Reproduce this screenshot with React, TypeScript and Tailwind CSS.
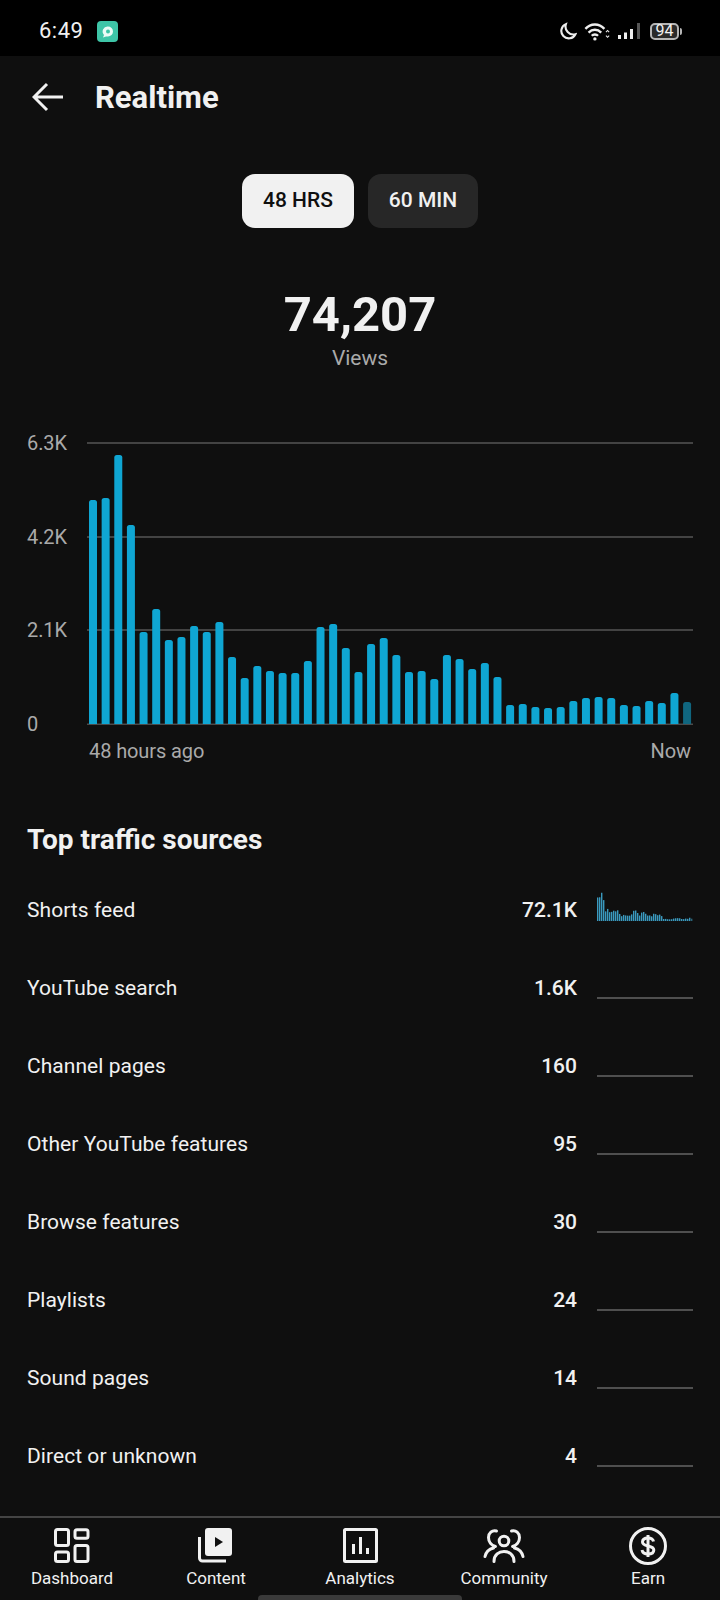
const BASE_Y = 282;

// bar heights in px, read off the 48 hour chart
const bars = [
  224, 226, 269, 199, 92, 115, 84, 87, 98, 92, 102, 67, 46, 58, 53, 51, 51, 63, 97, 100, 76, 52,
  80, 86, 69, 52, 53, 45, 69, 65, 55, 61, 47, 19, 20, 17, 16, 17, 23, 26, 27, 26, 19, 18, 23, 21, 31, 22,
];

const sources = [
  { name: "Shorts feed", value: "72.1K", spark: true },
  { name: "YouTube search", value: "1.6K" },
  { name: "Channel pages", value: "160" },
  { name: "Other YouTube features", value: "95" },
  { name: "Browse features", value: "30" },
  { name: "Playlists", value: "24" },
  { name: "Sound pages", value: "14" },
  { name: "Direct or unknown", value: "4" },
];

function barPath(x: number, h: number, w: number, r: number) {
  const top = BASE_Y - h;
  return `M${x} ${BASE_Y}V${top + r}Q${x} ${top} ${x + r} ${top}H${x + w - r}Q${x + w} ${top} ${x + w} ${top + r}V${BASE_Y}Z`;
}

function StatusBar() {
  return (
    <div className="flex h-14 items-center bg-black pl-[39px] pr-[38px] pt-[6px] text-[#f1f1f1]">
      <span className="text-[22px] leading-none tracking-[0.5px]">6:49</span>
      <svg width="21" height="21" viewBox="0 0 21 21" className="ml-[14px]">
        <rect width="21" height="21" rx="4" fill="#3ec5a7" />
        <path d="M11 5.500a5 5 0 0 1 0 10H9l-3 1 1-2.600a5 5 0 0 1 4-8.400Z" fill="#ecfbf6" />
        <circle cx="11" cy="10.500" r="2" fill="#3ec5a7" />
      </svg>
      <div className="ml-auto flex items-center">
        <svg width="18" height="18" viewBox="0 0 17 17" fill="none" stroke="#eee" strokeWidth="2">
          <path d="M6.500 2A7 7 0 1 0 15.500 11.500 7.500 7.500 0 0 1 6.500 2Z" />
        </svg>
        <svg width="26" height="19" viewBox="0 0 24 18" fill="none" stroke="#eee" strokeWidth="2.200" className="ml-[7px]">
          <path d="M1 6.500C6 1 14 1 19 6.500" />
          <path d="M4 10C7.500 6.500 12.500 6.500 16 10" />
          <path d="M7 13C8.500 11.500 11.500 11.500 13 13" />
          <circle cx="10" cy="16" r="1.600" fill="#eee" stroke="none" />
          <path d="M20.500 9.500l1.500-1.500 1.500 1.500M20.500 13l1.500 1.500 1.500-1.500" strokeWidth="1" />
        </svg>
        <svg width="24" height="18" viewBox="0 0 24 18" className="ml-[8px]">
          <rect x="0" y="13" width="3" height="4" fill="#eee" />
          <rect x="6" y="10.500" width="3" height="6.500" fill="#eee" />
          <rect x="12" y="7" width="3" height="10" fill="#eee" />
          <rect x="19" y="1" width="3" height="16" fill="#555" />
        </svg>
        <div className="ml-[8px] flex items-center">
          <div className="flex h-[17px] w-[29px] items-center justify-center rounded-[5px] border-2 border-[#b5b5b5] bg-[#2a2a2a] text-[16px] leading-none text-[#f1f1f1]">
            94
          </div>
          <div className="ml-[1px] h-[7px] w-[2px] rounded-r-sm bg-[#b5b5b5]" />
        </div>
      </div>
    </div>
  );
}

function Chart() {
  return (
    <div className="mt-[59px]">
      <div className="flex">
        <div className="flex h-[305px] w-[87px] flex-col justify-between pl-[27px] text-[20px] leading-6 tracking-[-0.1px] text-[#aaaaaa]">
          <span>6.3K</span>
          <span>4.2K</span>
          <span>2.1K</span>
          <span>0</span>
        </div>
        <svg width="606" height="284" viewBox="0 0 606 284" className="mt-[11px]">
          {[1, 95, 188].map((y) => (
            <rect key={y} x="0" y={y - 0.75} width="606" height="1.500" fill="#565656" />
          ))}
          <rect x="0" y="281.500" width="606" height="1.500" fill="#4a4a4a" />
          {bars.map((h, i) => (
            <path key={i} d={barPath(2 + i * 12.64, h, 8, 2.5)} fill={i === 47 ? "#10667f" : "#0fa6d3"} />
          ))}
        </svg>
      </div>
      <div className="mt-[3px] flex justify-between pl-[89px] pr-[29px] text-[20px] leading-6 tracking-[-0.1px] text-[#aaaaaa]">
        <span>48 hours ago</span>
        <span>Now</span>
      </div>
    </div>
  );
}

function Spark() {
  return (
    <svg width="96" height="30" viewBox="0 0 96 30" className="shrink-0">
      {bars.map((h, i) => (
        <rect key={i} x={i * 2} y={30 - h * 0.105} width="1.400" height={h * 0.105} fill={i === 47 ? "#2a6478" : "#3a9abf"} />
      ))}
    </svg>
  );
}

function SourceRow({ name, value, spark }: { name: string; value: string; spark?: boolean }) {
  return (
    <div className="flex h-[78px] items-center pl-[27px] pr-[27px] text-[21px] text-[#f1f1f1]">
      <span className="flex-1 tracking-[0.05px]">{name}</span>
      <span className="font-medium">{value}</span>
      <div className="ml-[20px] flex h-5 w-24 flex-col justify-end">
        {spark ? <Spark /> : <div className="h-[2px] bg-[#4f4f4f]" />}
      </div>
    </div>
  );
}

function DashboardIcon() {
  return (
    <svg width="36" height="36" viewBox="0 0 36 36" fill="none" stroke="#f1f1f1" strokeWidth="3">
      <rect x="1.500" y="1.500" width="13" height="16" rx="2" />
      <rect x="21" y="1.800" width="13" height="8.500" rx="2" />
      <rect x="1.500" y="24" width="13" height="9.500" rx="2" />
      <rect x="21" y="17.500" width="13" height="16" rx="2" />
    </svg>
  );
}

function ContentIcon() {
  return (
    <svg width="36" height="36" viewBox="0 0 36 36">
      <path d="M1.500 9V30a3 3 0 0 0 3 3H28" fill="none" stroke="#f1f1f1" strokeWidth="3" />
      <rect x="7" y="0" width="27" height="28" rx="3" fill="#f1f1f1" />
      <path d="M17 9L25 14 17 19Z" fill="#0f0f0f" />
    </svg>
  );
}

function AnalyticsIcon() {
  return (
    <svg width="36" height="36" viewBox="0 0 36 36" fill="none" stroke="#f1f1f1">
      <rect x="2.500" y="1.500" width="32" height="32" rx="1" strokeWidth="3" />
      <path d="M11.500 26V16M18.500 26V9M25.500 26V20" strokeWidth="3" />
    </svg>
  );
}

function CommunityIcon() {
  return (
    <svg width="42" height="36" viewBox="0 0 42 36" fill="none" stroke="#f1f1f1" strokeWidth="3" strokeLinecap="round">
      <circle cx="21" cy="13" r="4.800" />
      <path d="M11 33.500C11 26.500 16 23.500 21 23.500S31 26.500 31 33.500" />
      <path d="M13.500 3C9 1.800 5.500 5 5.500 9.500 5.500 14 8.500 17.500 12.500 18.500" />
      <path d="M28.500 3C33 1.800 36.500 5 36.500 9.500 36.500 14 33.500 17.500 29.500 18.500" />
      <path d="M2 28.500C3 24 6.500 21 10.500 20" />
      <path d="M40 28.500C39 24 35.500 21 31.500 20" />
    </svg>
  );
}

function EarnIcon() {
  return (
    <svg width="38" height="38" viewBox="0 0 38 38" fill="none" stroke="#f1f1f1" strokeWidth="3">
      <circle cx="19" cy="19" r="17.500" />
      <path d="M24.500 14.500C24 12 22 11 19 11 15.500 11 13.500 12.700 13.500 15 13.500 20.500 24.800 17.500 24.800 23 24.800 25.500 22.500 27 19 27 15.500 27 13.500 25.500 13 23" strokeWidth="3" />
      <path d="M19 8V30" strokeWidth="3" />
    </svg>
  );
}

const navItems = [
  { label: "Dashboard", icon: <DashboardIcon /> },
  { label: "Content", icon: <ContentIcon /> },
  { label: "Analytics", icon: <AnalyticsIcon /> },
  { label: "Community", icon: <CommunityIcon /> },
  { label: "Earn", icon: <EarnIcon /> },
];

export default function App() {
  return (
    <div className="relative flex h-[1600px] w-[720px] flex-col overflow-hidden bg-[#0f0f0f] font-[Roboto,sans-serif] text-[#f1f1f1]">
      <StatusBar />

      <div className="flex h-[82px] items-center pl-[32px]">
        <svg width="32" height="30" viewBox="0 0 32 30" fill="none" stroke="#f1f1f1" strokeWidth="3">
          <path d="M31 15H2M15 2L2 15 15 28" />
        </svg>
        <h1 className="ml-[31px] text-[31px] font-bold leading-none">Realtime</h1>
      </div>

      <div className="mt-9 flex justify-center gap-[14px] text-[21px] font-medium">
        <button className="flex h-[54px] w-[112px] items-center justify-center rounded-[13px] bg-[#f1f1f1] text-[#0f0f0f]">48 HRS</button>
        <button className="flex h-[54px] w-[110px] items-center justify-center rounded-[13px] bg-[#272727] text-[#f1f1f1]">60 MIN</button>
      </div>

      <div className="mt-[59px] text-center text-[49px] font-bold leading-[56px]">74,207</div>
      <div className="mt-[1px] text-center text-[21px] leading-7 text-[#aaaaaa]">Views</div>

      <Chart />

      <h2 className="mt-[59px] pl-[27px] text-[28px] font-bold leading-9">Top traffic sources</h2>

      <div className="mt-[14px]">
        {sources.map((s) => (
          <SourceRow key={s.name} name={s.name} value={s.value} spark={s.spark} />
        ))}
      </div>

      <div className="mt-auto grid h-[84px] grid-cols-5 border-t-2 border-[#444444] pt-[9px]">
        {navItems.map((item) => (
          <div key={item.label} className="flex flex-col items-center">
            <div className="flex h-[38px] items-center justify-center">{item.icon}</div>
            <span className="mt-[2px] text-[17px] leading-[22px] text-[#f1f1f1]">{item.label}</span>
          </div>
        ))}
      </div>

      <div className="absolute bottom-0 left-[258px] h-[5px] w-[204px] rounded-t-sm bg-[#3a3a3a]" />
    </div>
  );
}
